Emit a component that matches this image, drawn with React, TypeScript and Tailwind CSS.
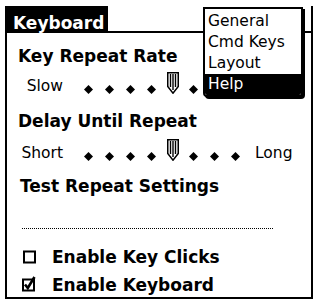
import React from "react";

const bold = "font-['DejaVu_Sans',sans-serif] font-bold text-[17px] leading-[20px] text-black";
const reg = "font-['DejaVu_Sans',sans-serif] text-[15.5px] leading-[20px] text-black";

function Diamond() {
  return (
    <svg width="9" height="9" viewBox="0 0 9 9" className="mt-[8.5px]">
      <polygon points="4.5,0 9,4.5 4.5,9 0,4.5" fill="#000" />
    </svg>
  );
}

function Thumb() {
  return (
    <svg width="12" height="22" viewBox="0 0 12 22" className="-mt-[4px]">
      <path d="M0.75,0.75 H11.25 V14.5 L6,21.2 L0.75,14.5 Z" fill="#fff" stroke="#000" strokeWidth="1.5" />
      <line x1="3.5" y1="2" x2="3.5" y2="15" stroke="#000" strokeWidth="1.4" />
      <line x1="6" y1="2" x2="6" y2="18" stroke="#000" strokeWidth="1.4" />
      <line x1="8.5" y1="2" x2="8.5" y2="15" stroke="#000" strokeWidth="1.4" />
    </svg>
  );
}

function Slider({ left, right }: { left: string; right: string }) {
  const cells = [0, 1, 2, 3, 4, 5, 6, 7];
  return (
    <div className="flex h-[20px] pl-[11px]">
      <div className={`${reg} w-[45px] text-right`}>{left}</div>
      <div className="flex ml-[15px]">
        {cells.map((i) => (
          <div key={i} className="flex w-[21px] h-[20px] justify-center items-start">
            {i === 4 ? <Thumb /> : <Diamond />}
          </div>
        ))}
      </div>
      <div className={`${reg} ml-[9px]`}>{right}</div>
    </div>
  );
}

function EmptyBox() {
  return (
    <svg width="14" height="16" viewBox="0 0 14 16" className="mt-[1px]">
      <rect x="1" y="3.5" width="11" height="11" fill="#fff" stroke="#000" strokeWidth="2" />
    </svg>
  );
}

function CheckedBox() {
  return (
    <svg width="14" height="16" viewBox="0 0 14 16" className="mt-[1px]">
      <rect x="1" y="3.5" width="11" height="11" fill="#fff" stroke="#000" strokeWidth="2" />
      <polyline points="3,8.5 5.8,12 12.5,1" fill="none" stroke="#000" strokeWidth="2.6" />
    </svg>
  );
}

export default function App() {
  return (
    <div className="w-[320px] h-[304px] bg-white overflow-hidden">
      <div className="relative ml-[5px] mt-[6px] w-[308px] h-[293px] border-l-2 border-r-2 border-b-2 border-black">
        <div className="flex h-[27px]">
          <div className={`${bold} bg-black text-white w-[101px] h-[27px] pl-[6px] pt-[7px]`}>
            <span className="text-white">Keyboard</span>
          </div>
          <div className="flex-1 border-b-2 border-black" />
        </div>

        <div className={`${bold} mt-[13px] pl-[11px]`}>Key Repeat Rate</div>
        <div className="mt-[10px]">
          <Slider left="Slow" right="Fast" />
        </div>

        <div className={`${bold} mt-[15px] pl-[11px]`}>Delay Until Repeat</div>
        <div className="mt-[12px]">
          <Slider left="Short" right="Long" />
        </div>

        <div className={`${bold} mt-[13px] pl-[13px]`}>Test Repeat Settings</div>

        <div className="mt-[32px] ml-[15px] w-[251px] border-t border-dotted border-black" />

        <div className="flex mt-[18px] pl-[16px]">
          <EmptyBox />
          <div className={`${bold} ml-[15px]`}>Enable Key Clicks</div>
        </div>
        <div className="flex mt-[8px] pl-[15px]">
          <CheckedBox />
          <div className={`${bold} ml-[16px]`}>Enable Keyboard</div>
        </div>

        <div className="absolute left-[196px] top-[1px] w-[100px] bg-white border-2 border-black rounded-b-[4px] shadow-[2px_2px_0_0_#000] pt-[2px]">
          <div className={`${reg} h-[21px] pl-[3px]`}>General</div>
          <div className={`${reg} h-[21px] pl-[3px]`}>Cmd Keys</div>
          <div className={`${reg} h-[21px] pl-[3px]`}>Layout</div>
          <div className={`${reg} h-[21px] pl-[3px] bg-black text-white rounded-b-[2px]`}>
            <span className="text-white">Help</span>
          </div>
        </div>
      </div>
    </div>
  );
}
